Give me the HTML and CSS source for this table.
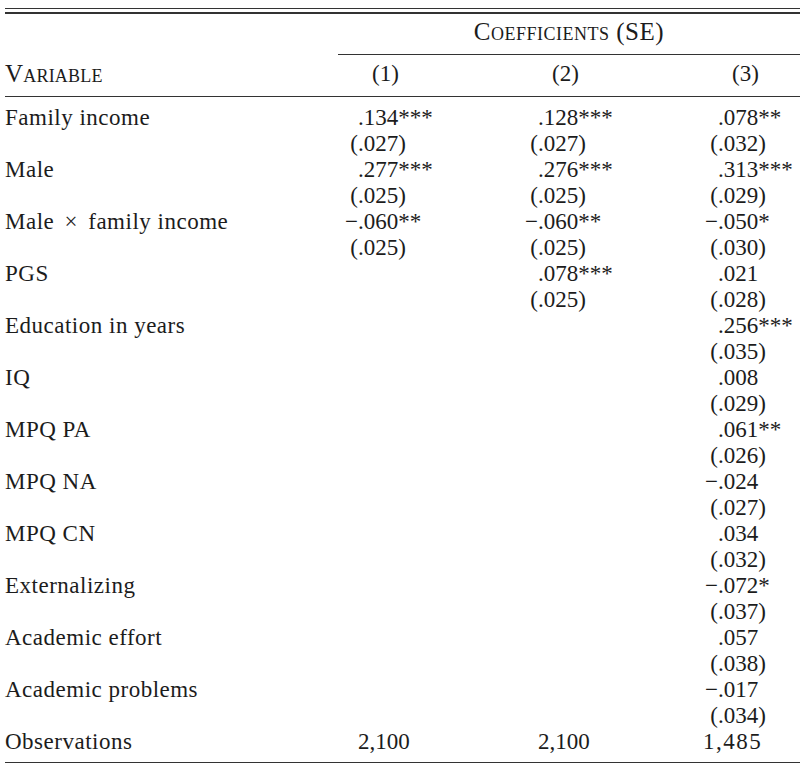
FILE: index.html
```html
<!DOCTYPE html>
<html>
<head>
<meta charset="utf-8">
<link rel="stylesheet" href="styles.css">
</head>
<body>
<div class="frame">
<table class="reg">
<colgroup><col class="c-var"><col class="c-num"><col class="c-num"><col class="c-last"></colgroup>
<thead>
<tr class="h1"><th></th><th colspan="3" class="span">Coefficients (SE)</th></tr>
<tr class="h2"><th class="lbl">Variable</th><th class="mid">(1)</th><th class="mid">(2)</th><th class="mid">(3)</th></tr>
</thead>
<tbody>
<tr class="first"><td class="lbl">Family income</td><td><span class="sg"></span>.134***</td><td><span class="sg"></span>.128***</td><td><span class="sg"></span>.078**</td></tr>
<tr><td></td><td><span class="sg">(</span>.027)</td><td><span class="sg">(</span>.027)</td><td><span class="sg">(</span>.032)</td></tr>
<tr><td class="lbl">Male</td><td><span class="sg"></span>.277***</td><td><span class="sg"></span>.276***</td><td><span class="sg"></span>.313***</td></tr>
<tr><td></td><td><span class="sg">(</span>.025)</td><td><span class="sg">(</span>.025)</td><td><span class="sg">(</span>.029)</td></tr>
<tr><td class="lbl">Male <span class="times">×</span> family income</td><td><span class="sg">−</span>.060**</td><td><span class="sg">−</span>.060**</td><td><span class="sg">−</span>.050*</td></tr>
<tr><td></td><td><span class="sg">(</span>.025)</td><td><span class="sg">(</span>.025)</td><td><span class="sg">(</span>.030)</td></tr>
<tr><td class="lbl">PGS</td><td></td><td><span class="sg"></span>.078***</td><td><span class="sg"></span>.021</td></tr>
<tr><td></td><td></td><td><span class="sg">(</span>.025)</td><td><span class="sg">(</span>.028)</td></tr>
<tr><td class="lbl">Education in years</td><td></td><td></td><td><span class="sg"></span>.256***</td></tr>
<tr><td></td><td></td><td></td><td><span class="sg">(</span>.035)</td></tr>
<tr><td class="lbl">IQ</td><td></td><td></td><td><span class="sg"></span>.008</td></tr>
<tr><td></td><td></td><td></td><td><span class="sg">(</span>.029)</td></tr>
<tr><td class="lbl">MPQ PA</td><td></td><td></td><td><span class="sg"></span>.061**</td></tr>
<tr><td></td><td></td><td></td><td><span class="sg">(</span>.026)</td></tr>
<tr><td class="lbl">MPQ NA</td><td></td><td></td><td><span class="sg">−</span>.024</td></tr>
<tr><td></td><td></td><td></td><td><span class="sg">(</span>.027)</td></tr>
<tr><td class="lbl">MPQ CN</td><td></td><td></td><td><span class="sg"></span>.034</td></tr>
<tr><td></td><td></td><td></td><td><span class="sg">(</span>.032)</td></tr>
<tr><td class="lbl">Externalizing</td><td></td><td></td><td><span class="sg">−</span>.072*</td></tr>
<tr><td></td><td></td><td></td><td><span class="sg">(</span>.037)</td></tr>
<tr><td class="lbl">Academic effort</td><td></td><td></td><td><span class="sg"></span>.057</td></tr>
<tr><td></td><td></td><td></td><td><span class="sg">(</span>.038)</td></tr>
<tr><td class="lbl">Academic problems</td><td></td><td></td><td><span class="sg">−</span>.017</td></tr>
<tr><td></td><td></td><td></td><td><span class="sg">(</span>.034)</td></tr>
<tr class="last"><td class="lbl">Observations</td><td><span class="sg"></span>2,100</td><td><span class="sg"></span>2,100</td><td class="obs3">1,485</td></tr>
</tbody>
</table>
</div>
</body>
</html>
```
FILE: styles.css
```css
html, body {
  margin: 0;
  padding: 0;
  background: #ffffff;
}
body {
  padding: 8px 0 0 5px;
  font-family: "Liberation Serif", "Times New Roman", serif;
  font-size: 23px;
  color: #1c1c1c;
}
.frame {
  border-top: 1px solid #333;
  padding-top: 3px;
}
.reg {
  width: 795px;
  border-collapse: collapse;
  border-top: 2px solid #333;
  table-layout: fixed;
}
.c-var { width: 333px; }
.c-num { width: 180px; }
.c-last { width: 102px; }
.reg th, .reg td {
  padding: 0;
  line-height: 26px;
  height: 26px;
  font-weight: normal;
  text-align: left;
  white-space: nowrap;
  vertical-align: top;
}
.reg td.lbl, .reg th.lbl {
  letter-spacing: 0.5px;
}
.times {
  padding: 0 4px;
}
.h1 th {
  padding-top: 5px;
  padding-bottom: 9px;
}
.h1 th.span {
  text-align: center;
  font-variant: small-caps;
  font-size: 25px;
  letter-spacing: 0.5px;
  border-bottom: 1px solid #333;
}
.h2 th {
  padding-top: 6px;
  padding-bottom: 9px;
  border-bottom: 1px solid #333;
}
.h2 th.lbl {
  font-variant: small-caps;
  font-size: 25px;
  letter-spacing: 0.2px;
}
.h2 th.mid {
  text-align: left;
  padding-left: 34px;
}
.reg tr.first td {
  padding-top: 8px;
}
.reg tr.last td {
  padding-bottom: 7px;
  border-bottom: 1px solid #333;
}
.reg td.obs3 {
  padding-left: 5px;
  letter-spacing: 1.5px;
}
.sg {
  display: inline-block;
  width: 20px;
  text-align: right;
}
```
